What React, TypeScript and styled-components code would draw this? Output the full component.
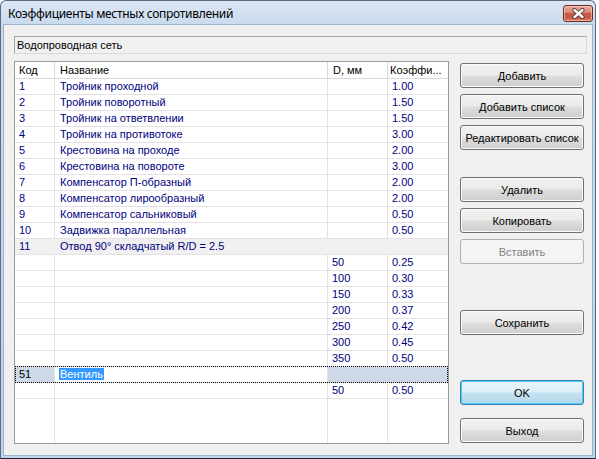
import React from "react";
import styled, { createGlobalStyle, css } from "styled-components";

const GlobalStyle = createGlobalStyle`
  html, body { margin: 0; padding: 0; background: #ffffff; }
  * { box-sizing: border-box; }
`;

const Page = styled.div`
  width: 599px;
  height: 459px;
  overflow: hidden;
  background: #ffffff;
  font-family: "Liberation Sans", Arial, sans-serif;
  font-size: 11px;
`;

const Window = styled.div`
  width: 596px;
  height: 459px;
  display: flex;
  flex-direction: column;
  border: 1px solid #5b6a80;
  border-bottom-color: #1c2532;
  border-radius: 6px 6px 0 0;
  background: linear-gradient(to bottom, #dce7f4 0px, #c9daee 24px, #c2d5eb 100%);
`;

const TitleBar = styled.div`
  height: 23px;
  display: flex;
  align-items: flex-start;
  padding-left: 7px;
`;

const TitleText = styled.div`
  flex: 1;
  margin-top: 5px;
  font-family: "Noto Sans", "Open Sans", sans-serif;
  font-size: 12px;
  letter-spacing: -0.3px;
  line-height: 16px;
  color: #000000;
`;

const CloseButton = styled.div`
  width: 30px;
  height: 17px;
  margin-top: 4px;
  margin-right: 2px;
  border: 1px solid #6d2a22;
  border-radius: 3px;
  background: linear-gradient(to bottom, #e9a99c 0%, #d98a7a 42%, #c75846 50%, #c95a46 80%, #d9806a 100%);
  box-shadow: inset 0 0 0 1px rgba(255, 220, 210, 0.55);
  display: flex;
  align-items: center;
  justify-content: center;
`;

const Client = styled.div`
  flex: 1;
  margin: 0 2px 2px;
  border: 1px solid #9fb2c9;
  background: #f0f0f0;
  display: flex;
  flex-direction: column;
  gap: 7px;
  padding: 11px 5px 11px 10px;
`;

const NetworkField = styled.div`
  height: 18px;
  border: 1px solid #a6a6a6;
  border-right-color: #dadada;
  border-bottom-color: #dadada;
  background: #f0f0f0;
  color: #000000;
  padding-left: 2px;
  line-height: 16px;
  white-space: nowrap;
`;

const Body = styled.div`
  flex: 1;
  display: flex;
  gap: 11px;
  min-height: 0;
`;

const Grid = styled.div`
  width: 435px;
  height: 383px;
  border: 1px solid #9a9a9a;
  background: #ffffff;
  display: flex;
  flex-direction: column;
`;

const COLS = "40px 273px 60px 60px";

const HeaderRow = styled.div`
  display: grid;
  grid-template-columns: ${COLS};
  height: 17px;
  border-bottom: 1px solid #d9d9d9;
  background: #ffffff;
`;

const HeaderCell = styled.div<{ $last?: boolean; $pad: number }>`
  border-right: ${(p) => (p.$last ? "none" : "1px solid #d9d9d9")};
  padding-left: ${(p) => p.$pad}px;
  line-height: 16px;
  color: #000000;
  white-space: nowrap;
  overflow: hidden;
`;

const Row = styled.div<{ $group?: boolean; $selected?: boolean }>`
  position: relative;
  display: grid;
  grid-template-columns: ${COLS};
  height: 16px;
  border-bottom: 1px solid #e2e2e2;
  background: ${(p) => (p.$group ? "#f0f0f0" : "#ffffff")};
  ${(p) =>
    p.$selected &&
    css`
      &::after {
        content: "";
        position: absolute;
        left: 0;
        right: 0;
        top: -1px;
        bottom: -1px;
        border: 1px dotted #000000;
        pointer-events: none;
      }
    `}
`;

const Cell = styled.div<{
  $divider?: boolean;
  $pad: number;
  $bg?: string;
  $color?: string;
  $span?: number;
}>`
  grid-column: span ${(p) => p.$span ?? 1};
  border-right: ${(p) => (p.$divider ? "1px solid #e2e2e2" : "none")};
  padding-left: ${(p) => p.$pad}px;
  background: ${(p) => p.$bg ?? "transparent"};
  color: ${(p) => p.$color ?? "#000080"};
  line-height: 15px;
  white-space: nowrap;
  overflow: visible;
`;

const Filler = styled.div`
  flex: 1;
  display: grid;
  grid-template-columns: ${COLS};
`;

const FillerCell = styled.div<{ $divider?: boolean }>`
  border-right: ${(p) => (p.$divider ? "1px solid #e2e2e2" : "none")};
`;

const EditText = styled.span`
  display: inline-block;
  background: #3399ff;
  color: #ffffff;
  line-height: 12px;
  padding: 0 1px;
  margin-left: -1px;
`;

const ButtonColumn = styled.div`
  width: 124px;
  display: flex;
  flex-direction: column;
  padding-top: 2px;
`;

const WinButton = styled.div<{ $gap: number; $variant?: "default" | "disabled" | "normal" }>`
  height: 25px;
  margin-top: ${(p) => p.$gap}px;
  border-radius: 3px;
  display: flex;
  align-items: center;
  justify-content: center;
  white-space: nowrap;
  color: #000000;
  border: 1px solid #707070;
  background: linear-gradient(to bottom, #f2f2f2 0%, #ebebeb 48%, #dddddd 52%, #cfcfcf 100%);
  box-shadow: inset 0 0 0 1px #fbfbfb;
  ${(p) =>
    p.$variant === "default" &&
    css`
      border-color: #3c7fb1;
      background: linear-gradient(to bottom, #eaf6fd 0%, #dceff9 48%, #c6e2f1 52%, #b3d7eb 100%);
      box-shadow: inset 0 0 0 1px #48d0f8;
    `}
  ${(p) =>
    p.$variant === "disabled" &&
    css`
      border-color: #adb2b5;
      background: #f4f4f4;
      box-shadow: none;
      color: #838383;
    `}
`;

type DataRow = { code: string; name: string; coef: string };

const mainRows: DataRow[] = [
  { code: "1", name: "Тройник проходной", coef: "1.00" },
  { code: "2", name: "Тройник поворотный", coef: "1.50" },
  { code: "3", name: "Тройник на ответвлении", coef: "1.50" },
  { code: "4", name: "Тройник на противотоке", coef: "3.00" },
  { code: "5", name: "Крестовина на проходе", coef: "2.00" },
  { code: "6", name: "Крестовина на повороте", coef: "3.00" },
  { code: "7", name: "Компенсатор П-образный", coef: "2.00" },
  { code: "8", name: "Компенсатор лирообразный", coef: "2.00" },
  { code: "9", name: "Компенсатор сальниковый", coef: "0.50" },
  { code: "10", name: "Задвижка параллельная", coef: "0.50" },
];

const subRows: [string, string][] = [
  ["50", "0.25"],
  ["100", "0.30"],
  ["150", "0.33"],
  ["200", "0.37"],
  ["250", "0.42"],
  ["300", "0.45"],
  ["350", "0.50"],
];

const SubRow: React.FC<{ d: string; k: string }> = ({ d, k }) => (
  <Row>
    <Cell $divider $pad={4} />
    <Cell $divider $pad={5} />
    <Cell $divider $pad={4}>{d}</Cell>
    <Cell $pad={4}>{k}</Cell>
  </Row>
);

const CloseIcon = () => (
  <svg width="13" height="11" viewBox="0 0 13 11">
    <path d="M2.5 2 L10.5 9 M10.5 2 L2.5 9" stroke="#4a2a26" strokeWidth="4" strokeLinecap="round" />
    <path d="M2.5 2 L10.5 9 M10.5 2 L2.5 9" stroke="#ffffff" strokeWidth="2.4" strokeLinecap="round" />
  </svg>
);

export default function App() {
  return (
    <Page>
      <GlobalStyle />
      <Window>
        <TitleBar>
          <TitleText>Коэффициенты местных сопротивлений</TitleText>
          <CloseButton>
            <CloseIcon />
          </CloseButton>
        </TitleBar>
        <Client>
          <NetworkField>Водопроводная сеть</NetworkField>
          <Body>
            <Grid>
              <HeaderRow>
                <HeaderCell $pad={4}>Код</HeaderCell>
                <HeaderCell $pad={5}>Название</HeaderCell>
                <HeaderCell $pad={5}>D, мм</HeaderCell>
                <HeaderCell $pad={2} $last>
                  Коэффи...
                </HeaderCell>
              </HeaderRow>
              {mainRows.map((r) => (
                <Row key={r.code}>
                  <Cell $divider $pad={4}>{r.code}</Cell>
                  <Cell $divider $pad={5}>{r.name}</Cell>
                  <Cell $divider $pad={4} />
                  <Cell $pad={4}>{r.coef}</Cell>
                </Row>
              ))}
              <Row $group>
                <Cell $pad={4}>11</Cell>
                <Cell $pad={5} $span={3}>
                  Отвод 90° складчатый R/D = 2.5
                </Cell>
              </Row>
              {subRows.map(([d, k]) => (
                <SubRow key={d} d={d} k={k} />
              ))}
              <Row $selected>
                <Cell $divider $pad={4} $bg="#cdd9e6" $color="#000000">
                  51
                </Cell>
                <Cell $divider $pad={5}>
                  <EditText>Вентиль</EditText>
                </Cell>
                <Cell $pad={4} $span={2} $bg="#cdd9e6" />
              </Row>
              <SubRow d="50" k="0.50" />
              <Filler>
                <FillerCell $divider />
                <FillerCell $divider />
                <FillerCell $divider />
                <FillerCell />
              </Filler>
            </Grid>
            <ButtonColumn>
              <WinButton $gap={0}>Добавить</WinButton>
              <WinButton $gap={6}>Добавить список</WinButton>
              <WinButton $gap={6}>Редактировать список</WinButton>
              <WinButton $gap={27}>Удалить</WinButton>
              <WinButton $gap={6}>Копировать</WinButton>
              <WinButton $gap={6} $variant="disabled">
                Вставить
              </WinButton>
              <WinButton $gap={46}>Сохранить</WinButton>
              <WinButton $gap={45} $variant="default">
                OK
              </WinButton>
              <WinButton $gap={13}>Выход</WinButton>
            </ButtonColumn>
          </Body>
        </Client>
      </Window>
    </Page>
  );
}
